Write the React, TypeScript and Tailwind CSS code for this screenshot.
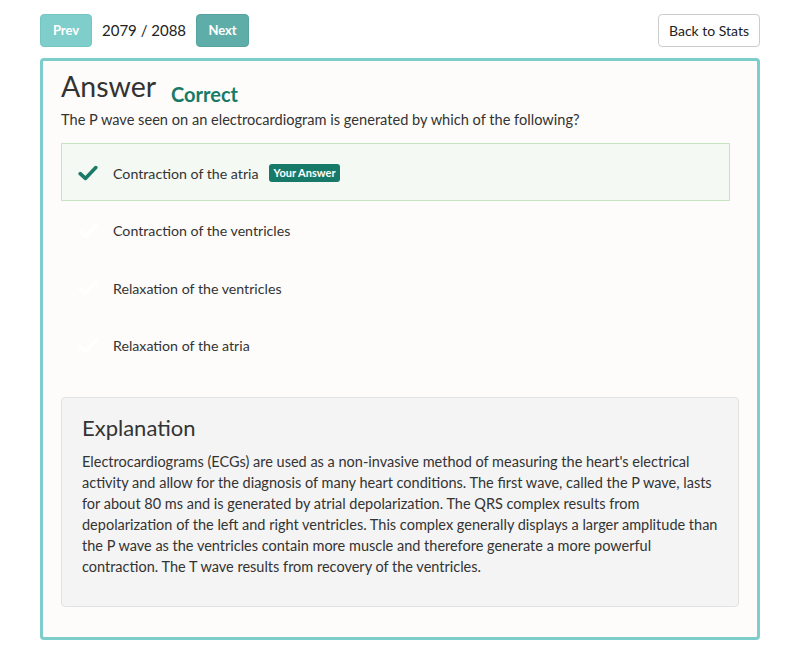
import React from "react";

// ─── data ─────────────────────────────────────────────────────────────────────
const options = [
  { text: "Contraction of the atria", correct: true, mine: true },
  { text: "Contraction of the ventricles" },
  { text: "Relaxation of the ventricles" },
  { text: "Relaxation of the atria" },
];

const explanation =
  "Electrocardiograms (ECGs) are used as a non-invasive method of measuring the heart's electrical activity and allow for the diagnosis of many heart conditions. The first wave, called the P wave, lasts for about 80 ms and is generated by atrial depolarization. The QRS complex results from depolarization of the left and right ventricles. This complex generally displays a larger amplitude than the P wave as the ventricles contain more muscle and therefore generate a more powerful contraction. The T wave results from recovery of the ventricles.";

function Check({ className }: { className: string }) {
  return (
    <svg viewBox="0 0 20 16" className={className} aria-hidden="true">
      <path
        d="M2.2 8.6 L7.4 13.4 L17.8 2.6"
        fill="none"
        stroke="currentColor"
        strokeWidth="3.6"
        strokeLinecap="round"
        strokeLinejoin="round"
      />
    </svg>
  );
}

// ─── component ────────────────────────────────────────────────────────────────
export default function App() {
  return (
    <div
      className="min-h-[664px] bg-white px-[40px] pt-[14px] text-[#333]"
      style={{ fontFamily: "Lato, 'Open Sans', sans-serif" }}
    >
      {/* ── Top nav ─────────────────────────────────────────────── */}
      <div className="flex items-center justify-between">
        <div className="flex items-center gap-[10px]">
          <button className="h-[33px] w-[52px] rounded-[4px] border border-[#74c6c3] bg-[#7fcecb] text-[13px] font-bold text-white">
            Prev
          </button>
          <span className="text-[15px] text-[#222]">2079 / 2088</span>
          <button className="h-[33px] w-[53px] rounded-[4px] border border-[#56a39f] bg-[#5fada9] text-[13px] font-bold text-white">
            Next
          </button>
        </div>
        <button className="h-[33px] w-[102px] rounded-[4px] border border-[#cccccc] bg-white text-[14px] text-[#222]">
          Back to Stats
        </button>
      </div>

      {/* ── Answer card ─────────────────────────────────────────── */}
      <div className="mt-[11px] rounded-[4px] border-[3px] border-[#7dcdca] bg-[#fdfcfa] px-[18px] pt-[9px] pb-[30px]">
        <div className="flex items-end gap-[15px]">
          <h1 className="text-[28.5px] leading-[33px] text-[#333]">Answer</h1>
          <span className="mb-[-4px] text-[20px] font-bold leading-[26px] text-[#177a67]">Correct</span>
        </div>
        <p className="mt-[7px] text-[14.6px] leading-[20px] text-[#333]">
          The P wave seen on an electrocardiogram is generated by which of the following?
        </p>

        <div className="mt-[13px] mr-[9px] flex flex-col">
          {options.map((o) => (
            <div
              key={o.text}
              className={`flex h-[57.5px] items-center border pt-[3px] pl-[16px] ${
                o.correct ? "border-[#c6e4c1] bg-[#f4f9f3]" : "border-transparent"
              }`}
            >
              <Check
                className={`h-[16px] w-[20px] ${o.correct ? "text-[#1a7a67]" : "text-white"}`}
              />
              <span className="ml-[15px] text-[14.2px] text-[#333]">{o.text}</span>
              {o.mine && (
                <span className="ml-[10px] rounded-[3px] bg-[#177a68] px-[5px] py-[2px] text-[11px] font-bold leading-[14px] text-white">
                  Your Answer
                </span>
              )}
            </div>
          ))}
        </div>

        {/* ── Explanation ─────────────────────────────────────── */}
        <div className="mt-[24px] rounded-[4px] border border-[#e2e2e2] bg-[#f4f4f4] pl-[20px] pr-[19px] pt-[15px] pb-[29px]">
          <h2 className="text-[22px] leading-[30px] text-[#333]">Explanation</h2>
          <p className="mt-[8px] text-[14.5px] leading-[21px] text-[#333]">{explanation}</p>
        </div>
      </div>
    </div>
  );
}
